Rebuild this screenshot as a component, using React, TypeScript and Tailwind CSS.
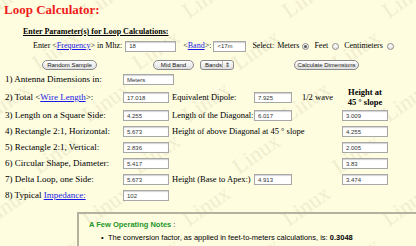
import React from "react";

function Field({ value, wide }: { value: string; wide?: string }) {
  return (
    <input
      readOnly
      value={value}
      className={`${wide ?? "w-[46px]"} h-[11px] shrink-0 border border-[#a8a8a8] bg-white px-[3px] font-['Liberation_Sans',sans-serif] text-[6px] leading-[9px] text-[#333] shadow-[inset_0_1px_1px_rgba(0,0,0,0.18)] outline-none`}
    />
  );
}

function Radio({ checked }: { checked?: boolean }) {
  return (
    <span className="inline-flex h-[7px] w-[7px] shrink-0 items-center justify-center rounded-full border border-[#8c8c8c] bg-gradient-to-b from-white to-[#e4e4e4]">
      {checked && <span className="h-[3px] w-[3px] rounded-full bg-[#555]" />}
    </span>
  );
}

function Pill({ label, w }: { label: string; w: string }) {
  return (
    <span
      className={`${w} inline-flex h-[10px] shrink-0 items-center justify-center rounded-full border border-[#8a8a8a] bg-gradient-to-b from-white to-[#dedede] font-['Liberation_Sans',sans-serif] text-[6px] leading-none text-[#222]`}
    >
      {label}
    </span>
  );
}

function Link({ children }: { children: React.ReactNode }) {
  return <span className="text-[#1a1ae6] underline">{children}</span>;
}

function Row({
  label,
  value,
  valueW,
  mid,
  midInput,
  extra,
  right,
  h = "h-[16px]",
}: {
  label: React.ReactNode;
  value: string;
  valueW?: string;
  mid?: React.ReactNode;
  midInput?: string;
  extra?: React.ReactNode;
  right?: React.ReactNode;
  h?: string;
}) {
  return (
    <div className={`flex ${h} items-center`}>
      <div className="w-[123px] shrink-0 whitespace-nowrap pl-[5px]">{label}</div>
      <div className="w-[49px] shrink-0">
        <Field value={value} wide={valueW} />
      </div>
      <div className="relative flex w-[82px] shrink-0 items-center whitespace-nowrap text-[8.5px]">{mid}</div>
      <div className="w-[44px] shrink-0">{midInput && <Field value={midInput} wide="w-[38px]" />}</div>
      <div className="w-[44px] shrink-0 whitespace-nowrap text-[8.5px]">{extra}</div>
      <div className="w-[46px] shrink-0">{right}</div>
    </div>
  );
}

const marks = (() => {
  const out: { x: number; y: number }[] = [];
  for (let r = 0; r < 6; r++) {
    for (let c = 0; c < 6; c++) {
      out.push({ x: -20 + c * 100 + (r % 2) * 50, y: -8 + r * 52 });
    }
  }
  return out;
})();

export default function App() {
  return (
    <div className="relative h-[246px] w-[416px] overflow-hidden bg-[#fefde0] font-['Liberation_Serif',serif] text-[9px] leading-[12px] text-black">
      <div className="pointer-events-none absolute inset-0">
        {marks.map((m, i) => (
          <span
            key={i}
            className="absolute -rotate-[35deg] font-['Liberation_Serif',serif] text-[22px] text-[#f1edcf]"
            style={{ left: m.x, top: m.y }}
          >
            Linux
          </span>
        ))}
      </div>

      <div className="relative flex flex-col">
        <div className="pl-[4px] pt-[2px] text-[13px] font-bold leading-[16px] text-[#ee1c1c]">Loop Calculator:</div>

        <div className="mt-[8px] pl-[23px] text-[8px] font-bold underline">
          Enter Parameter(s) for Loop Calculations:
        </div>

        <div className="mt-[2px] flex h-[12px] items-center whitespace-nowrap pl-[33px] text-[8px]">
          <span>
            Enter &lt;<Link>Frequency</Link>&gt; in Mhz:
          </span>
          <span className="ml-[3px] flex">
            <Field value="18" wide="w-[51px]" />
          </span>
          <span className="ml-[7px]">
            &lt;<Link>Band</Link>&gt;:
          </span>
          <span className="ml-[2px] flex">
            <Field value="<17m" wide="w-[33px]" />
          </span>
          <span className="ml-[6px]">Select:</span>
          <span className="ml-[3px]">Meters</span>
          <span className="ml-[3px] flex">
            <Radio checked />
          </span>
          <span className="ml-[5px]">Feet</span>
          <span className="ml-[4px] flex">
            <Radio />
          </span>
          <span className="ml-[5px]">Centimeters</span>
          <span className="ml-[4px] flex">
            <Radio />
          </span>
        </div>

        <div className="mt-[7px] flex h-[11px] items-center">
          <span className="ml-[42px] flex">
            <Pill label="Random Sample" w="w-[55px]" />
          </span>
          <span className="ml-[56px] flex">
            <Pill label="Mid Band" w="w-[41px]" />
          </span>
          <span className="ml-[6px] inline-flex h-[10px] w-[34px] items-center justify-between rounded-[3px] border border-[#8a8a8a] bg-gradient-to-b from-white to-[#dedede] pl-[4px] pr-[3px] font-['Liberation_Sans',sans-serif] text-[6px] leading-none text-[#222]">
            <span>Bands</span>
            <span className="flex items-center gap-[2px]">
              <span className="h-[7px] w-px bg-[#bbb]" />
              <span className="text-[6px]">⇕</span>
            </span>
          </span>
          <span className="ml-[60px] flex">
            <Pill label="Calculate Dimensions" w="w-[65px]" />
          </span>
        </div>

        <div className="mt-[1px] flex flex-col">
          <Row label="1) Antenna Dimensions in:" value="Meters" valueW="w-[51px]" />
          <Row
            h="h-[20px]"
            label={
              <>
                2) Total &lt;<Link>Wire Length</Link>&gt;:
              </>
            }
            value="17.018"
            mid={<span>Equivalent Dipole:</span>}
            midInput="7.925"
            extra={<span className="ml-[4px]">1/2 wave</span>}
            right={
              <div className="-mt-[1px] whitespace-nowrap text-center text-[8.5px] font-bold leading-[10px]">
                Height at
                <br />
                45 ° slope
              </div>
            }
          />
          <Row
            label="3) Length on a Square Side:"
            value="4.255"
            mid={<span>Length of the Diagonal:</span>}
            midInput="6.017"
            right={<Field value="3.009" />}
          />
          <Row
            label="4) Rectangle 2:1, Horizontal:"
            value="5.673"
            mid={<span className="absolute left-0">Height of above Diagonal at 45 ° slope</span>}
            right={<Field value="4.255" />}
          />
          <Row label="5) Rectangle 2:1, Vertical:" value="2.836" right={<Field value="2.005" />} />
          <Row label="6) Circular Shape, Diameter:" value="5.417" right={<Field value="3.83" />} />
          <Row
            label="7) Delta Loop, one Side:"
            value="5.673"
            mid={<span>Height (Base to Apex:)</span>}
            midInput="4.913"
            right={<Field value="3.474" />}
          />
          <Row
            label={
              <>
                8) Typical <Link>Impedance:</Link>
              </>
            }
            value="102"
          />
        </div>

        <div className="ml-[77px] mt-[9px] w-[400px] border-l-2 border-t-2 border-[#b4b19e] pl-[10px] pt-[5px] font-['Liberation_Sans',sans-serif] text-[7.5px] leading-[11px]">
          <div className="font-bold text-[#23962a]">
            A Few Operating Notes <span className="font-normal text-black">:</span>
          </div>
          <ul className="mt-[2px] pl-[19px] leading-[11px]">
            <li className="relative whitespace-nowrap">
              <span className="absolute -left-[7px]">•</span>
              The conversion factor, as applied in feet-to-meters calculations, is: <b>0.3048</b>
            </li>
            <li className="relative mt-[1px] whitespace-nowrap">
              <span className="absolute -left-[7px]">•</span>
              The value used for sin, (45 degrees), is: <b>0.7071</b>
            </li>
          </ul>
        </div>
      </div>
    </div>
  );
}
